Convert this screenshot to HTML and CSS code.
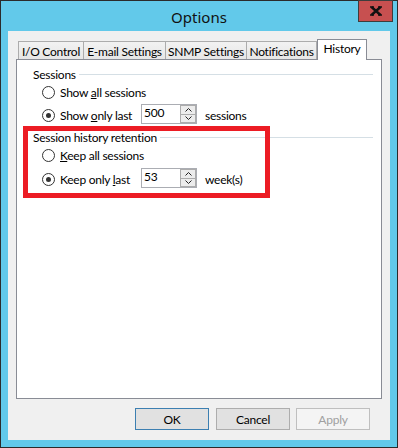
FILE: index.html
```html
<!DOCTYPE html>
<html>
<head>
<meta charset="utf-8">
<link rel="stylesheet" href="styles.css">
</head>
<body>
<div class="window">
  <div class="titlebar">
    <span class="title">Options</span>
    <div class="close">
      <svg width="12" height="10" viewBox="0 0 12 10"><path d="M1.5 1 L10.5 9 M10.5 1 L1.5 9" stroke="#111" stroke-width="2.4" fill="none"/><path d="M0 1 H4 M8 1 H12 M0 9 H4 M8 9 H12" stroke="#111" stroke-width="1.4"/></svg>
    </div>
  </div>
  <div class="client">
    <div class="tabs">
      <div class="tab w-io">I/O Control</div>
      <div class="tab w-mail">E-mail Settings</div>
      <div class="tab w-snmp">SNMP Settings</div>
      <div class="tab w-notif">Notifications</div>
      <div class="tab active w-hist">History</div>
    </div>
    <div class="panel">
      <div class="group">
        <div class="group-head"><span class="group-label">Sessions</span><span class="rule"></span></div>
        <div class="opt"><span class="radio"></span><span class="lbl">Show <u>a</u>ll sessions</span></div>
        <div class="opt opt-spin g1r2"><span class="radio on"></span><span class="lbl fixed">Show <u>o</u>nly last</span>
          <span class="spin"><span class="val">500</span><span class="arrows"><span class="arr"><svg width="7" height="4" viewBox="0 0 7 4"><path d="M0.5 3.5 L3.5 0.5 L6.5 3.5" stroke="#222" fill="none"/></svg></span><span class="arr"><svg width="7" height="4" viewBox="0 0 7 4"><path d="M0.5 0.5 L3.5 3.5 L6.5 0.5" stroke="#222" fill="none"/></svg></span></span></span>
          <span class="unit">sessions</span></div>
      </div>
      <div class="group g2">
        <div class="group-head"><span class="group-label">Session history retention</span><span class="rule"></span></div>
        <div class="opt"><span class="radio"></span><span class="lbl"><u>K</u>eep all sessions</span></div>
        <div class="opt opt-spin g2r2"><span class="radio on"></span><span class="lbl fixed">Keep only <u>l</u>ast</span>
          <span class="spin"><span class="val">53</span><span class="arrows"><span class="arr"><svg width="7" height="4" viewBox="0 0 7 4"><path d="M0.5 3.5 L3.5 0.5 L6.5 3.5" stroke="#222" fill="none"/></svg></span><span class="arr"><svg width="7" height="4" viewBox="0 0 7 4"><path d="M0.5 0.5 L3.5 3.5 L6.5 0.5" stroke="#222" fill="none"/></svg></span></span></span>
          <span class="unit">week(s)</span></div>
      </div>
      <div class="highlight"></div>
    </div>
    <div class="buttons">
      <div class="btn default">OK</div>
      <div class="btn">Cancel</div>
      <div class="btn disabled">Apply</div>
    </div>
  </div>
</div>
</body>
</html>
```
FILE: styles.css
```css
* { box-sizing: border-box; }
html, body { margin: 0; padding: 0; }
body {
  width: 398px;
  height: 448px;
  font-family: "Lato", "Noto Sans", sans-serif;
  font-size: 12px;
  letter-spacing: -0.25px;
  color: #000;
}
.window {
  position: relative;
  width: 398px;
  height: 448px;
  border: 1px solid #2b2b2b;
  background: #62c9ea;
  padding: 0 7px 7px 7px;
  display: flex;
  flex-direction: column;
}
.titlebar {
  height: 30px;
  display: flex;
  align-items: center;
  justify-content: center;
}
.title {
  font-family: "Noto Sans", sans-serif;
  font-size: 15px;
  letter-spacing: 0;
  color: #111;
  margin-top: 2px;
}
.close {
  position: absolute;
  top: -1px;
  left: 357px;
  width: 35px;
  height: 22px;
  background: #c75050;
  border: 1px solid #3d3d3d;
  display: flex;
  align-items: center;
  justify-content: center;
}
.client {
  flex: 1;
  background: #f0f0f0;
  padding: 8px 8px 0 8px;
  display: flex;
  flex-direction: column;
}
.tabs {
  height: 20px;
  display: flex;
  align-items: flex-end;
  padding-left: 2px;
  position: relative;
  z-index: 1;
}
.tab {
  height: 18px;
  border: 1px solid #acacac;
  border-bottom: none;
  background: linear-gradient(#f2f2f2, #e6e6e6);
  margin-left: -1px;
  display: flex;
  align-items: center;
  justify-content: center;
  padding-top: 1px;
  white-space: nowrap;
}
.tab:first-child { margin-left: 0; }
.tab.active {
  height: 21px;
  margin-bottom: -1px;
  background: #fff;
  border-color: #898c95;
  padding-bottom: 4px;
  padding-top: 0;
}
.w-io { width: 66px; }
.w-mail { width: 83px; }
.w-snmp { width: 82px; }
.w-notif { width: 71px; }
.w-hist { width: 50px; margin-left: 0; }
.panel {
  position: relative;
  height: 340px;
  border: 1px solid #898c95;
  background: #fff;
  padding: 6px 8px 0 0;
}
.group-head {
  height: 16px;
  display: flex;
  align-items: center;
  padding-left: 16px;
}
.group-label { white-space: nowrap; }
.rule {
  flex: 1;
  height: 1px;
  background: #d5dfe5;
  margin-left: 3px;
}
.g2 { margin-top: 4px; }
.opt {
  height: 20px;
  display: flex;
  align-items: center;
  padding-left: 25px;
}
.g1r2 { margin-top: 3px; }
.g2r2 { margin-top: 4px; }
.radio {
  width: 13px;
  height: 13px;
  border: 1px solid #333;
  border-radius: 50%;
  background: #fff;
  display: flex;
  align-items: center;
  justify-content: center;
  flex: none;
}
.radio.on::after {
  content: "";
  width: 5px;
  height: 5px;
  border-radius: 50%;
  background: #333;
}
.lbl { margin-left: 5px; white-space: nowrap; }
.lbl.fixed { width: 81px; }
.spin {
  width: 56px;
  height: 20px;
  border: 1px solid #abadb3;
  display: flex;
  margin-top: -2px;
  background: #fff;
}
.val { flex: 1; padding-left: 2px; line-height: 16px; }
.arrows {
  width: 16px;
  display: flex;
  flex-direction: column;
}
.arr {
  flex: 1;
  border: 1px solid #acacac;
  background: #ececec;
  display: flex;
  align-items: center;
  justify-content: center;
}
.arr + .arr { border-top: none; }
.unit { margin-left: 8px; white-space: nowrap; }
.highlight {
  position: absolute;
  left: 6px;
  top: 66px;
  width: 247px;
  height: 72px;
  border: 5px solid #ec1c24;
}
.buttons {
  display: flex;
  justify-content: flex-end;
  padding: 9px 12px 0 0;
}
.btn {
  width: 74px;
  height: 22px;
  border: 1px solid #adadad;
  background: #e1e1e1;
  display: flex;
  align-items: center;
  justify-content: center;
  margin-left: 7px;
}
.btn.default { border-color: #3c7fb1; }
.btn.disabled {
  margin-left: 6px;
  border-color: #bfbfbf;
  background: #f4f4f4;
  color: #a0a0a0;
}
```
